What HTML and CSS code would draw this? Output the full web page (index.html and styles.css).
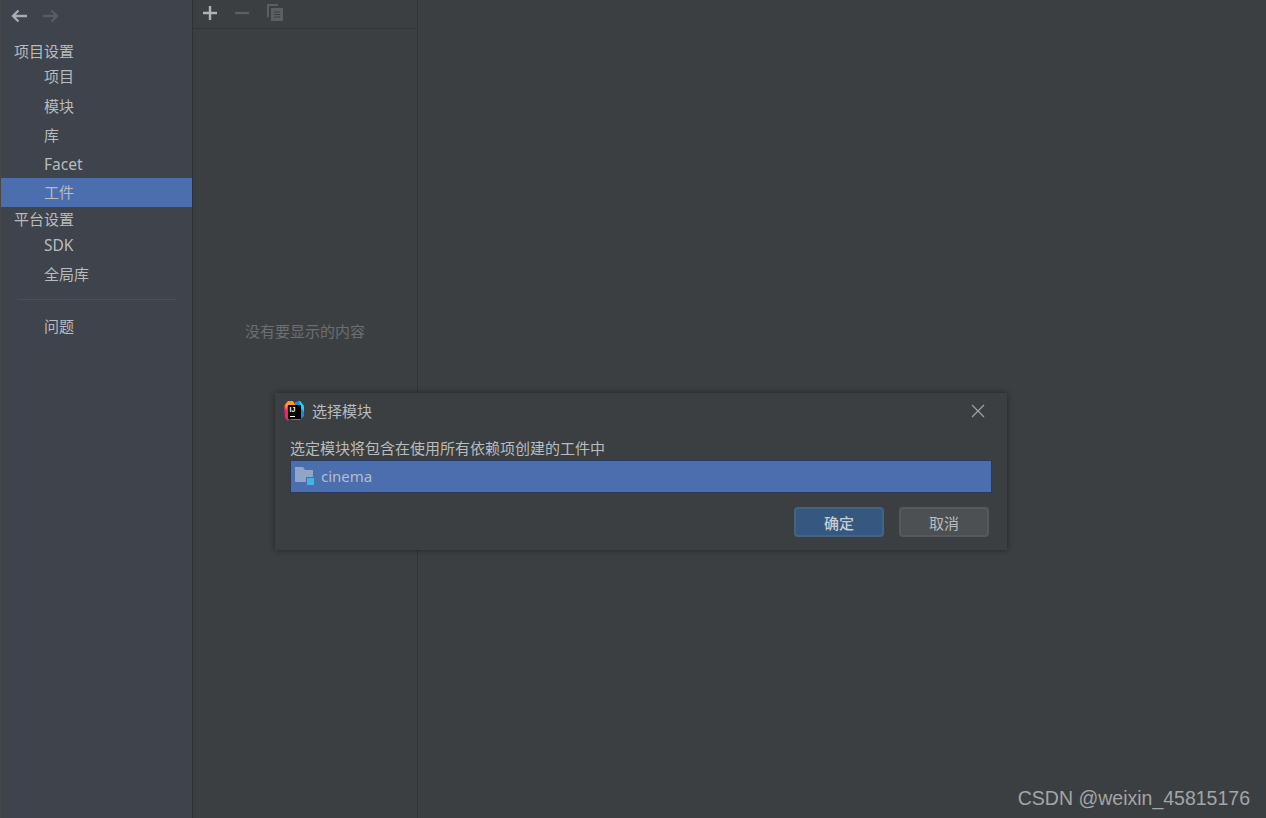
FILE: index.html
```html
<!DOCTYPE html>
<html lang="zh">
<head>
  <meta charset="UTF-8" />
  <title>项目结构</title>
  <link rel="stylesheet" href="styles.css">
</head>
<body>
<div class="sidebar">
  <div class="nav-arrows">
    <svg width="18" height="14" viewBox="0 0 18 14" class="arrow-on"><path d="M17 7H3M8.500 1.500 3 7l5.500 5.500" fill="none" stroke="currentColor" stroke-width="2.400"/></svg>
    <svg width="18" height="14" viewBox="0 0 18 14" class="arrow-off"><path d="M1 7h14M9.500 1.500 15 7l-5.500 5.500" fill="none" stroke="currentColor" stroke-width="2.400"/></svg>
  </div>
  <div class="nav-head first">项目设置</div>
  <div class="nav-item top">项目</div>
  <div class="nav-item low">模块</div>
  <div class="nav-item low">库</div>
  <div class="nav-item low latin">Facet</div>
  <div class="nav-item active">工件</div>
  <div class="nav-head">平台设置</div>
  <div class="nav-item sdk latin">SDK</div>
  <div class="nav-item low">全局库</div>
  <div class="nav-divider"></div>
  <div class="nav-item last">问题</div>
</div>

<div class="middle">
  <div class="toolbar">
    <svg width="14" height="14" viewBox="0 0 14 14" class="tool-on"><path d="M7 0v14M0 7h14" fill="none" stroke="currentColor" stroke-width="2.400"/></svg>
    <svg width="14" height="14" viewBox="0 0 14 14" class="tool-off"><path d="M0 7h14" fill="none" stroke="currentColor" stroke-width="2.400"/></svg>
    <svg width="16" height="17" viewBox="0 0 16 17" class="tool-off"><path d="M0 0h11v2H2v11H0z" fill="currentColor"/><path d="M4 4h12v13H4z" fill="currentColor"/><path d="M7 8h6M7 10.500h6M7 13h6" stroke="#3c3f41" stroke-width="1"/></svg>
  </div>
  <div class="empty">没有要显示的内容</div>
</div>

<div class="content"></div>

<div class="dialog">
  <div class="dialog-title">
    <svg width="20" height="20" viewBox="0 0 20 20" class="app-logo">
      <path d="M0 5 3 1l5-1 4 3-3 10-5 7-3-3z" fill="#f9206b"/>
      <path d="M1 4 4 0h5l2 4H4L2 9z" fill="#ff9a1e"/>
      <path d="M11 1l5-1 4 5v10l-4 4H7l4-9z" fill="#0a8fe8"/>
      <path d="M15 0h1l4 5v6l-3-4z" fill="#1fd2e8"/>
      <rect x="4" y="4" width="13" height="14" fill="#000"/>
      <rect x="6" y="15" width="5" height="1" fill="#fff"/>
      <text x="5.500" y="11" class="logo-text">IJ</text>
    </svg>
    <span class="title-text">选择模块</span>
    <svg width="14" height="14" viewBox="0 0 14 14" class="close"><path d="M1 1l12 12M13 1 1 13" fill="none" stroke="currentColor" stroke-width="1.200"/></svg>
  </div>
  <div class="dialog-body">
    <div class="dialog-label">选定模块将包含在使用所有依赖项创建的工件中</div>
    <div class="module-list">
      <svg width="20" height="20" viewBox="0 0 20 20" class="folder">
        <path d="M0 1h8l2 3h8v12H0z" fill="#8fa6c8"/>
        <rect x="11.500" y="11.500" width="8" height="8" fill="#3fb4e6" stroke="#4b6eaf"/>
      </svg>
      <span>cinema</span>
    </div>
    <div class="dialog-buttons">
      <button class="btn primary">确定</button>
      <button class="btn">取消</button>
    </div>
  </div>
</div>

<div class="watermark">CSDN @weixin_45815176</div>
</body>
</html>
```

FILE: styles.css
```css
* {
  margin: 0;
  padding: 0;
  box-sizing: border-box;
}

html, body {
  height: 100%;
  overflow: hidden;
}

body {
  display: flex;
  font-family: "Noto Sans", "Noto Sans CJK SC", sans-serif;
  font-size: 15px;
  color: #b9bcbe;
  background-color: #3c3f41;
}

.sidebar {
  width: 193px;
  background-color: #3e434c;
  border-left: 1px solid #45474a;
  border-right: 1px solid #2f3133;
  flex-shrink: 0;
}

.nav-arrows {
  display: flex;
  align-items: center;
  gap: 14px;
  height: 32px;
  padding-left: 9px;
}

.arrow-on {
  color: #a9adb0;
}

.arrow-off {
  color: #5a5d60;
}

.nav-head {
  height: 24px;
  line-height: 24px;
  padding-left: 13px;
}

.nav-head.first {
  margin-top: 7px;
}

.nav-item {
  height: 29px;
  line-height: 29px;
  padding-left: 43px;
}

/* rows in the shot are not evenly spaced, nudge the text */
.nav-item.top {
  height: 28px;
  line-height: 27px;
}

.nav-item.low {
  line-height: 31px;
}

.nav-item.last {
  line-height: 30px;
}

.nav-item.sdk {
  height: 28px;
  line-height: 28px;
}

.nav-item.latin {
  font-size: 15.500px;
}

.nav-item.active {
  background-color: #4b6eaf;
}

.nav-divider {
  height: 1px;
  margin: 11px 16px;
  background-color: #4c5058;
}

.middle {
  width: 225px;
  display: flex;
  flex-direction: column;
  border-right: 1px solid #323436;
  flex-shrink: 0;
}

.toolbar {
  display: flex;
  align-items: center;
  gap: 18px;
  height: 29px;
  padding: 0 0 3px 10px;
  border-bottom: 1px solid #323436;
}

.tool-on {
  color: #b0b3b5;
}

.tool-off {
  color: #5c5f61;
}

.empty {
  margin-top: 291px;
  text-align: center;
  color: #6c6f71;
}

.content {
  flex: 1;
}

.dialog {
  position: absolute;
  left: 275px;
  top: 393px;
  width: 732px;
  height: 157px;
  background-color: #3c3f41;
  box-shadow: 0 0 6px rgba(0, 0, 0, 0.45);
}

.dialog-title {
  display: flex;
  align-items: center;
  height: 36px;
  padding: 0 22px 0 9px;
}

.app-logo {
  margin-right: 8px;
}

.logo-text {
  font-family: "Liberation Sans", sans-serif;
  font-size: 7px;
  font-weight: bold;
  fill: #fff;
}

.title-text {
  flex: 1;
  margin: 0 0 2px 0;
}

.close {
  color: #a0a3a5;
}

.dialog-body {
  padding: 9px 15px 0;
}

.dialog-label {
  height: 22px;
  line-height: 20px;
}

.module-list {
  display: flex;
  align-items: center;
  gap: 6px;
  height: 33px;
  padding: 0 0 1px 4px;
  background-color: #4b6eaf;
  border: 1px solid #2b3a5c;
  color: #b4bdcb;
}

.dialog-buttons {
  display: flex;
  justify-content: flex-end;
  gap: 15px;
  margin-top: 14px;
  padding-right: 3px;
}

.btn {
  width: 90px;
  height: 30px;
  font-family: inherit;
  font-size: 15px;
  color: #b9bcbe;
  background-color: #4c5052;
  border: 2px solid #56595b;
  border-radius: 4px;
}

.btn.primary {
  font-weight: 500;
  color: #c8ccd0;
  background-color: #365880;
  border-color: #426485;
}

.watermark {
  position: absolute;
  right: 16px;
  bottom: 8px;
  font-family: "Liberation Sans", sans-serif;
  font-size: 19.500px;
  color: #a3a5a7;
}
```
